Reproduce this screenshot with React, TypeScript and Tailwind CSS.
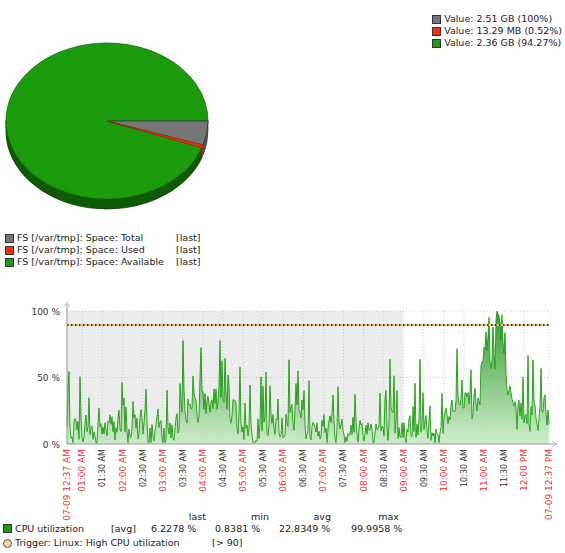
import React from 'react';

const X0 = 67;
const X1 = 549;
const Y0 = 444;
const Y100 = 311;
const pxPerMin = (X1 - X0) / 720;

function rng(seed: number) {
  let s = seed;
  return () => {
    s = (s * 1103515245 + 12345) % 2147483648;
    return s / 2147483648;
  };
}

function buildSeries() {
  const r = rng(7);
  const pts: [number, number][] = [];
  let v = 10;
  for (let x = X0; x <= X1; x++) {
    const m = (x - X0) / pxPerMin + 37; // minutes since midnight
    let base = 12;
    if (m > 210 && m < 290) base = 30;
    if (m > 360 && m < 390) base = 24;
    if (m > 610 && m < 655) base = 28;
    if (m > 655 && m < 690) base = 65;
    if (m > 690 && m < 700) base = 40;
    if (m > 700) base = 24;
    v = v * 0.4 + base * 0.6 + (r() - 0.5) * 22;
    let val = v;
    if (r() > 0.82) val += r() * 45;
    if (m > 660 && m < 685 && r() > 0.6) val = 85 + r() * 15;
    val = Math.max(1, Math.min(100, val));
    pts.push([x, Y0 - val * ((Y0 - Y100) / 100)]);
  }
  return pts;
}

const series = buildSeries();
const linePts = series.map(([x, y]) => `${x},${y.toFixed(1)}`).join(' ');
const areaPts = `${X0},${Y0} ${linePts} ${X1},${Y0}`;

const labels: { t: string; m: number; red: boolean }[] = [
  { t: '07-09 12:37 AM', m: 37, red: true },
];
for (let m = 60; m <= 720; m += 30) {
  const h = Math.floor(m / 60);
  const mm = m % 60;
  const hh = h === 0 ? 12 : h > 12 ? h - 12 : h;
  const ap = h >= 12 ? 'PM' : 'AM';
  labels.push({ t: `${String(hh).padStart(2, '0')}:${mm === 0 ? '00' : '30'} ${ap}`, m, red: mm === 0 });
}
labels.push({ t: '07-09 12:37 PM', m: 757, red: true });

function Pie() {
  const cx = 107, cy = 121, rx = 101, ry = 78, d = 10;
  const pt = (deg: number, dy = 0) => {
    const a = (deg * Math.PI) / 180;
    return `${(cx + rx * Math.cos(a)).toFixed(1)},${(cy + ry * Math.sin(a) + dy).toFixed(1)}`;
  };
  const g1 = 18, g2 = 20;
  return (
    <svg width="215" height="215" className="block">
      <path d={`M${cx - rx},${cy} L${cx - rx},${cy + d} A${rx},${ry} 0 0 0 ${pt(g2, d)} L${pt(g2)} A${rx},${ry} 0 0 1 ${cx - rx},${cy} Z`} fill="#0e5a05" stroke="#0a3a04" strokeWidth="0.8" />
      <path d={`M${pt(0)} L${pt(0, d)} A${rx},${ry} 0 0 1 ${pt(g1, d)} L${pt(g1)} Z`} fill="#555" stroke="#333" strokeWidth="0.6" />
      <path d={`M${pt(g1)} L${pt(g1, d)} A${rx},${ry} 0 0 1 ${pt(g2, d)} L${pt(g2)} Z`} fill="#b02000" />
      <path d={`M${cx},${cy} L${pt(g2)} A${rx},${ry} 0 1 1 ${pt(0)} Z`} fill="#1a9c0c" stroke="#116a07" strokeWidth="0.8" />
      <path d={`M${cx},${cy} L${pt(0)} A${rx},${ry} 0 0 1 ${pt(g1)} Z`} fill="#777" stroke="#333" strokeWidth="0.8" />
      <path d={`M${cx},${cy} L${pt(g1)} A${rx},${ry} 0 0 1 ${pt(g2)} Z`} fill="#ff2a00" stroke="#8a1a00" strokeWidth="0.5" />
    </svg>
  );
}

function Swatch({ c }: { c: string }) {
  return <span className="inline-block w-[9px] h-[9px] border border-[#333] mr-[3px] shrink-0" style={{ background: c }} />;
}

export default function App() {
  return (
    <div className="w-[565px] h-[553px] bg-white text-[#222] text-[9.5px] leading-[12px] overflow-hidden" style={{ fontFamily: '"DejaVu Sans", sans-serif' }}>
      <div className="flex justify-between">
        <Pie />
        <div className="pr-[3px] pt-[13px]">
          {[['#777', 'Value: 2.51 GB (100%)'], ['#ff2a00', 'Value: 13.29 MB (0.52%)'], ['#1a9c0c', 'Value: 2.36 GB (94.27%)']].map(([c, t]) => (
            <div key={t} className="flex items-center h-[12px]"><Swatch c={c} />{t}</div>
          ))}
        </div>
      </div>
      <div className="pl-[5px] mt-[17px]">
        {[['#777', 'Total'], ['#ff2a00', 'Used'], ['#1a9c0c', 'Available']].map(([c, t]) => (
          <div key={t} className="flex items-center h-[12px]">
            <Swatch c={c} />
            <span className="w-[159px]">FS [/var/tmp]: Space: {t}</span>
            <span>[last]</span>
          </div>
        ))}
      </div>
      <svg width="565" height="250" viewBox="0 296 565 250" className="block mt-[28px]">
        <defs>
          <linearGradient id="gf" x1="0" y1="0" x2="0" y2="1">
            <stop offset="0" stopColor="#0f8a0a" />
            <stop offset="1" stopColor="#c8eac4" />
          </linearGradient>
        </defs>
        <rect x={X0} y={Y100} width={403 - X0} height={Y0 - Y100} fill="#ececec" />
        {labels.slice(1, -1).map((l) => {
          const x = X0 + (l.m - 37) * pxPerMin;
          return <line key={l.t} x1={x} y1={Y100} x2={x} y2={Y0} stroke="#bbb" strokeWidth="0.7" strokeDasharray="1 2" />;
        })}
        <line x1={X0} y1={Y100} x2={X1} y2={Y100} stroke="#bbb" strokeWidth="0.7" strokeDasharray="1 2" />
        <line x1={X0} y1={377.5} x2={X1} y2={377.5} stroke="#bbb" strokeWidth="0.7" strokeDasharray="1 2" />
        <line x1={X1} y1={Y100} x2={X1} y2={Y0} stroke="#bbb" strokeWidth="0.7" strokeDasharray="1 2" />
        <polygon points={areaPts} fill="url(#gf)" opacity="0.85" />
        <polyline points={linePts} fill="none" stroke="#1a9c0c" strokeWidth="0.9" />
        <line x1={X0} y1={325} x2={X1} y2={325} stroke="#f5c96a" strokeWidth="2" />
        <line x1={X0} y1={325} x2={X1} y2={325} stroke="#333" strokeWidth="2" strokeDasharray="1.5 2.5" />
        <line x1={X0} y1={304} x2={X0} y2={Y0} stroke="#999" strokeWidth="1" />
        <line x1={X0} y1={Y0} x2={556} y2={Y0} stroke="#999" strokeWidth="1" />
        <path d="M64,307 L67,302 L70,307" fill="none" stroke="#aac" strokeWidth="0.8" />
        <path d="M552,441 L557,444 L552,447" fill="none" stroke="#aac" strokeWidth="0.8" />
        <text x="60" y="315" textAnchor="end" fontSize="9" fill="#333">100 %</text>
        <text x="60" y="381" textAnchor="end" fontSize="9" fill="#333">50 %</text>
        <text x="60" y="448" textAnchor="end" fontSize="9" fill="#333">0 %</text>
        {labels.map((l) => {
          const x = X0 + (l.m - 37) * pxPerMin + 3;
          return (
            <text key={l.t} transform={`translate(${x},449) rotate(-90)`} textAnchor="end" fontSize={l.red ? 9 : 8} fill={l.red ? '#f03030' : '#333'}>
              {l.t}
            </text>
          );
        })}
      </svg>
      <div className="pl-[3px] -mt-[35px]">
        <div className="flex h-[11px]">
          <span className="w-[150px]" />
          <span className="w-[64px] text-right pr-[11px]">last</span>
          <span className="w-[64px] text-right pr-[12px]">min</span>
          <span className="w-[64px] text-right pr-[14px]">avg</span>
          <span className="w-[64px] text-right pr-[10px]">max</span>
        </div>
        <div className="flex items-center h-[13px]">
          <Swatch c="#1a9c0c" />
          <span className="w-[96px]">CPU utilization</span>
          <span className="w-[40px]">[avg]</span>
          <span className="w-[64px]">6.2278 %</span>
          <span className="w-[64px]">0.8381 %</span>
          <span className="w-[72px]">22.8349 %</span>
          <span>99.9958 %</span>
        </div>
        <div className="flex items-center h-[16px]">
          <span className="inline-block w-[9px] h-[9px] rounded-full border border-[#555] bg-[#f8d890] mr-[3px]" />
          <span className="w-[197px]">Trigger: Linux: High CPU utilization</span>
          <span>[&gt; 90]</span>
        </div>
      </div>
    </div>
  );
}
